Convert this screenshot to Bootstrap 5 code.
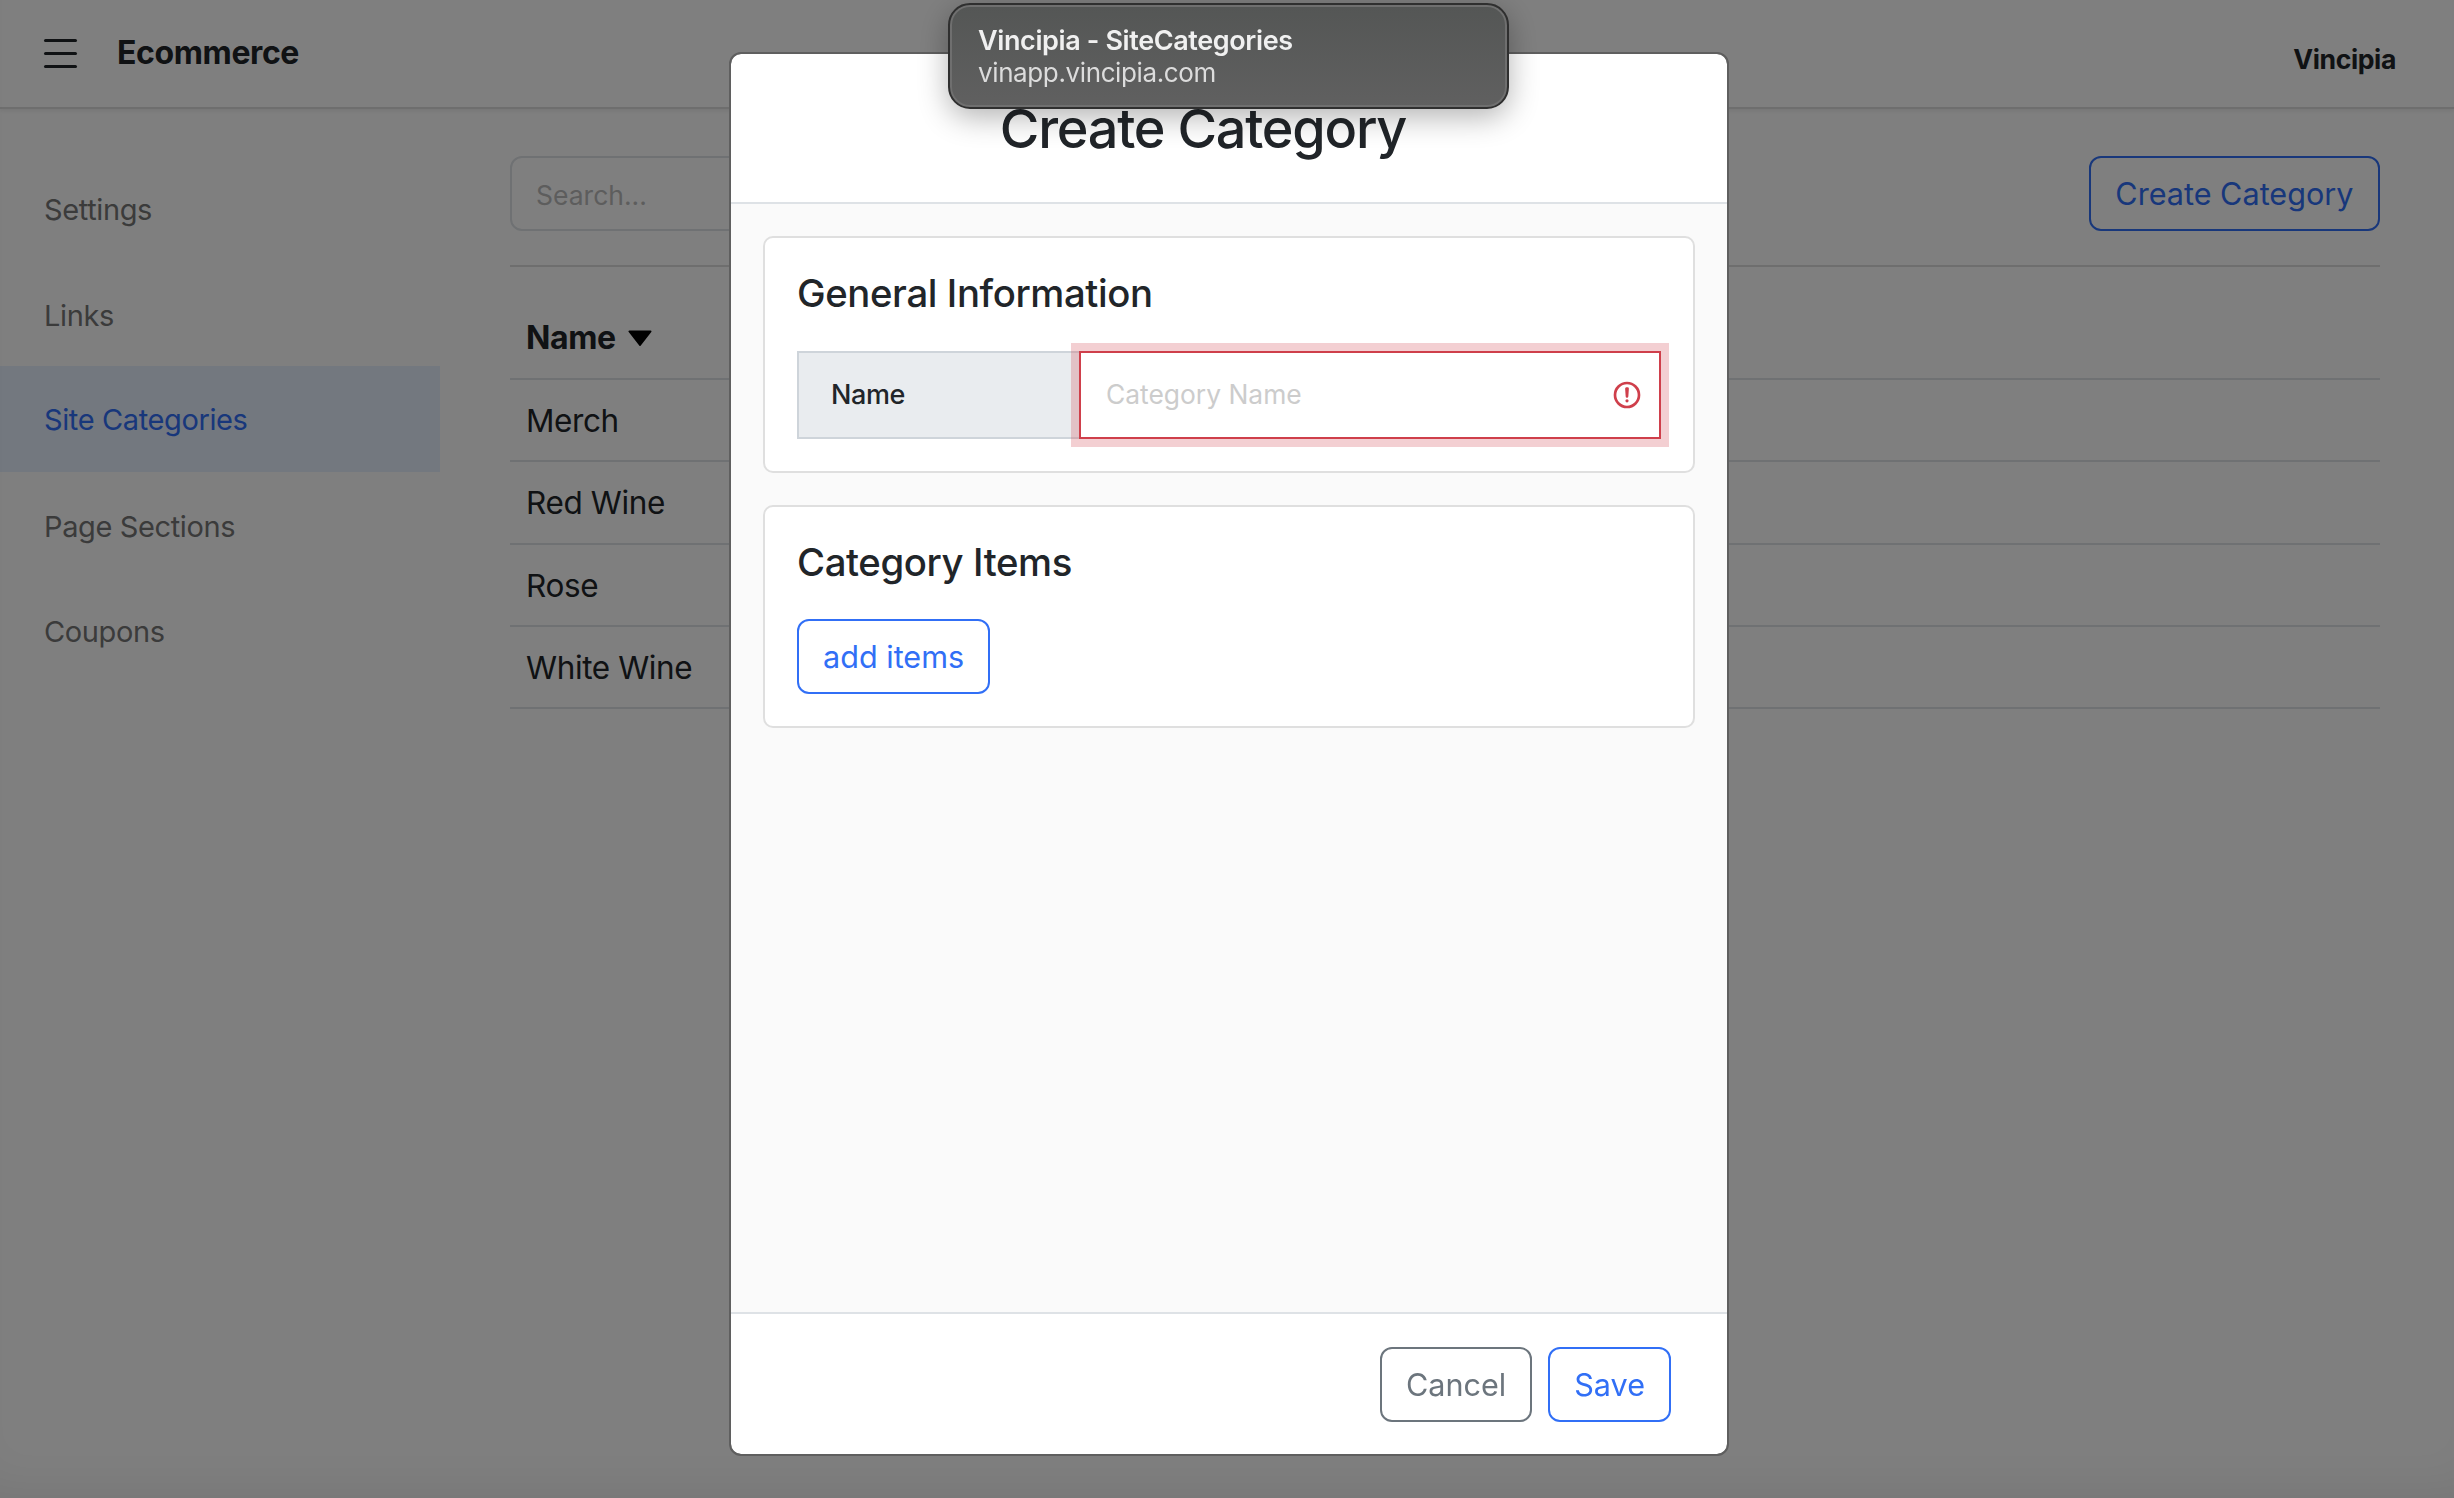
<!DOCTYPE html>
<html lang="en">
<head>
<meta charset="utf-8">
<title>Vincipia - SiteCategories</title>
<link href="https://cdn.jsdelivr.net/npm/bootstrap@5.3.0/dist/css/bootstrap.min.css" rel="stylesheet">
<style>
:root{--bs-border-width:2px;--bs-border-radius:8px;--bs-body-font-family:Inter,"Liberation Sans",sans-serif;--bs-body-color:#212529;--blue:#316ff6;--rouge:#cf3f4b}
html{font-size:32px}
body{height:1498px;overflow:hidden;letter-spacing:-.012em}
.top-bar{height:109px;background:#fff;border-bottom:2px solid #dcdcdc;box-shadow:0 2px 4px rgba(0,0,0,.08);padding:0 58px 0 44px}
.burger{width:33px;gap:10px}
.burger span{display:block;height:3px;border-radius:2px;background:#212529}
.brand-name{font-size:32px;font-weight:700;margin-left:40px;color:#212529;line-height:1;margin-top:-2px}
.org-name{font-size:26.6px;font-weight:700;margin-top:13px}
.side-col{width:440px;padding-top:46px;flex:none}
.side-col .nav-link{height:105.6px;display:flex;align-items:center;padding:4px 44px 0;color:#777;font-size:29px}
.side-col .nav-link.active{background:#e6f0fe;color:var(--blue);padding-top:1px}
.main-col{margin-left:70px;margin-right:74.5px;padding-top:47px;flex:1;min-width:0}
.search-box{width:700px;height:75px;font-size:26.5px;padding:12px 24px 10px}
.search-box::placeholder{color:#bbb}
.btn-blue{--bs-btn-color:var(--blue);--bs-btn-border-color:var(--blue);--bs-btn-hover-color:var(--blue);--bs-btn-hover-bg:transparent;--bs-btn-hover-border-color:var(--blue);height:75px;line-height:1;font-size:30.6px;padding:2px 24px 0;display:inline-flex;align-items:center}
.btn-grey{--bs-btn-color:#6c757d;--bs-btn-border-color:#6c757d;height:75px;line-height:1;font-size:30.6px;padding:2px 24px 0;display:inline-flex;align-items:center}
.rule{margin:34px 0 30px;border-top:2px solid #dcdcdc;opacity:1}
.cat-table{font-size:31.5px;margin:0}
.cat-table th{font-weight:700;font-size:32px;padding:17px 16px 16px;vertical-align:middle}
.cat-table td{padding:17px 16px 16px;vertical-align:middle}
.caret-down{width:24px;height:16px;margin-left:12px;vertical-align:3px}
.modal-wrap{--bs-modal-width:1000px;--bs-modal-margin:0;--bs-modal-border-width:2px;--bs-modal-border-color:#5f5f5f;--bs-modal-border-radius:12px;--bs-modal-inner-border-radius:10px;box-shadow:inset 0 -40px 60px -40px rgba(0,0,0,.1)}
.modal-wrap .modal-dialog{margin:52px 0 0 729px;height:1404px;max-width:1000px}
.modal-wrap .modal-content{height:100%}
.modal-wrap .modal-header{height:150px;padding:2px 52px 0 0;border-bottom-color:#dee2e6;flex:none}
.dlg-title{font-size:54px;font-weight:500;line-height:1;width:100%;text-align:center;margin:0;letter-spacing:-.023em}
.modal-wrap .modal-body{background:#fafafa;padding:32px 32px;display:flex;flex-direction:column;gap:32px}
.modal-wrap .modal-footer{padding:32px 56px 32px 0;gap:16px;height:142px;flex:none;border-top-color:#dee2e6}
.modal-wrap .modal-footer>*{margin:0}
.panel-card{--bs-card-border-color:#dfdfdf;--bs-card-border-radius:10px;--bs-card-spacer-x:32px;--bs-card-spacer-y:32px}
.panel-title{font-size:38.3px;font-weight:500;line-height:47px;margin:0 0 33.5px}
.name-group{height:88px;flex-wrap:nowrap}
.name-group .input-group-text{width:284px;padding:2px 32px 0;font-size:27px;font-weight:500;border-radius:0;background:#e9ecef;border-color:#ced4da}
.name-group .form-control{border-radius:0!important;border-color:var(--rouge);box-shadow:0 0 0 8px rgba(207,63,75,.25);font-size:26.4px;padding-left:25px;background-image:url("data:image/svg+xml,%3csvg xmlns='http://www.w3.org/2000/svg' viewBox='0 0 12 12' width='12' height='12' fill='none' stroke='%23cf3f4b'%3e%3ccircle cx='6' cy='6' r='4.5'/%3e%3cpath stroke-linejoin='round' d='M5.8 3.6h.4L6 6.5z'/%3e%3ccircle cx='6' cy='8.2' r='.6' fill='%23cf3f4b' stroke='none'/%3e%3c/svg%3e");background-size:32px;background-position:right 16px center;z-index:5;margin-left:-2px!important}
.name-group .form-control::placeholder{color:#ccc}
.tab-tip{position:fixed;z-index:1100;left:948px;top:3px;width:561px;height:106px;border-radius:22px;background:linear-gradient(#545655,#606060);border:2px solid #2f2f2f;box-shadow:inset 0 0 0 2px #6f6f6f,0 8px 30px rgba(0,0,0,.3);padding:20px 28px;color:#f0f0f0;font-size:26px;line-height:32px}
.tab-tip b{font-weight:600;display:block;font-size:27px}
.tab-tip span{color:#dcdcdc}
</style>
</head>
<body>
<div class="top-bar d-flex align-items-center justify-content-between">
  <div class="d-flex align-items-center">
    <div class="burger d-flex flex-column"><span></span><span></span><span></span></div>
    <div class="brand-name">Ecommerce</div>
  </div>
  <div class="org-name">Vincipia</div>
</div>
<div class="d-flex">
  <div class="side-col">
    <nav class="nav flex-column">
      <a class="nav-link" href="#">Settings</a>
      <a class="nav-link" href="#">Links</a>
      <a class="nav-link active" href="#">Site Categories</a>
      <a class="nav-link" href="#">Page Sections</a>
      <a class="nav-link" href="#">Coupons</a>
    </nav>
  </div>
  <div class="main-col">
    <div class="d-flex justify-content-between">
      <input class="form-control search-box" type="text" placeholder="Search...">
      <button class="btn btn-blue" type="button">Create Category</button>
    </div>
    <hr class="rule">
    <table class="table cat-table">
      <thead><tr><th>Name<svg class="caret-down" viewBox="0 0 24 16"><path d="M1.5 1.5h21L12 15z" fill="#000" stroke="#000" stroke-width="2" stroke-linejoin="round"/></svg></th></tr></thead>
      <tbody>
        <tr><td>Merch</td></tr>
        <tr><td>Red Wine</td></tr>
        <tr><td>Rose</td></tr>
        <tr><td>White Wine</td></tr>
      </tbody>
    </table>
  </div>
</div>
<div class="modal-backdrop show"></div>
<div class="modal modal-wrap d-block">
  <div class="modal-dialog">
    <div class="modal-content">
      <div class="modal-header"><h3 class="dlg-title">Create Category</h3></div>
      <div class="modal-body">
        <div class="card panel-card"><div class="card-body">
          <h4 class="panel-title">General Information</h4>
          <div class="input-group name-group">
            <span class="input-group-text">Name</span>
            <input class="form-control is-invalid" type="text" placeholder="Category Name">
          </div>
        </div></div>
        <div class="card panel-card"><div class="card-body">
          <h4 class="panel-title">Category Items</h4>
          <button class="btn btn-blue" type="button">add items</button>
        </div></div>
      </div>
      <div class="modal-footer">
        <button class="btn btn-grey" type="button">Cancel</button>
        <button class="btn btn-blue" type="button">Save</button>
      </div>
    </div>
  </div>
</div>
<div class="tab-tip"><b>Vincipia - SiteCategories</b><span>vinapp.vincipia.com</span></div>
<script src="https://cdn.jsdelivr.net/npm/bootstrap@5.3.0/dist/js/bootstrap.bundle.min.js"></script>
</body>
</html>
